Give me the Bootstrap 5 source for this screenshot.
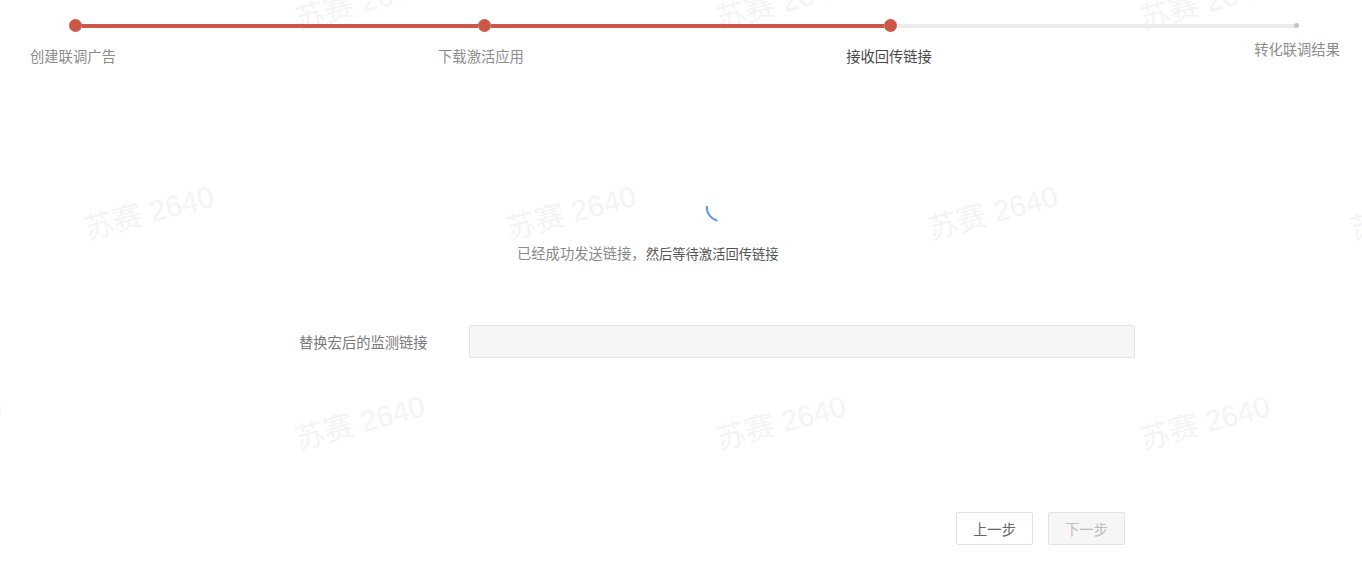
<!DOCTYPE html>
<html lang="zh-CN">
<head>
<meta charset="utf-8">
<title>接收回传链接</title>
<link href="https://cdn.jsdelivr.net/npm/bootstrap@5.3.0/dist/css/bootstrap.min.css" rel="stylesheet">
<style>
html,body{height:586px;overflow:hidden;background:#fff}
body{font-family:"Noto Sans CJK SC","Liberation Sans",sans-serif;font-size:14.3px;color:#666}
.page-wrap{position:relative;height:586px;overflow:hidden}
.wm-layer{position:absolute;inset:0;pointer-events:none}
.wm{position:absolute;font-size:29.5px;line-height:40px;color:#f4f4f4;white-space:nowrap;transform:rotate(-15deg);transform-origin:left center;font-family:"Liberation Sans","Noto Sans CJK SC",sans-serif}
.rail{height:51px;padding-left:69px;padding-top:19px}
.dot-big{width:13px;height:13px;border-radius:50%;background:#cb5748;flex:none}
.dot-small{width:5px;height:5px;border-radius:50%;background:#c4c4c4;flex:none}
.seg{height:4px;flex:none}
.seg-a{width:396px;background:#cb5748}
.seg-b{width:393px;background:#cb5748}
.seg-c{width:397px;background:#ececec}
.step-labels{padding:0 22px 0 30px;line-height:20px}
.step-text{color:#8c8c8c;white-space:nowrap;margin-top:-5px}
.step-now{color:#4a4a4a}
.step-last{margin-top:-12px}
.spin-zone{height:157px}
.spin-svg{display:block;margin-left:705px}
.msg{margin:19px 0 0 517px;line-height:22px;color:#8a8a8a;white-space:nowrap}
.msg-dark{color:#555;font-size:13.3px}
.field-row{margin-top:60px;height:33px}
.field-label{width:469px;padding-left:299px;color:#7a7a7a;white-space:nowrap}
.field-box{width:666px;height:33px;background:#f6f6f6;border:1px solid #e3e3e3;border-radius:2px;padding:0 8px}
.field-box:disabled{background:#f6f6f6;opacity:1}
.btn-row{margin-top:154px;padding-left:956px;gap:15px}
.step-btn{width:77px;height:33px;padding:0;font-size:14.3px;border-radius:2px;border:1px solid #e2e2e2;background:#fff;color:#666}
.step-btn:disabled{background:#f6f6f6;color:#bdbdbd;border-color:#e2e2e2;opacity:1}
.front{position:relative}
</style>
</head>
<body>
<div class="page-wrap">
  <div class="wm-layer" aria-hidden="true">
    <span class="wm" style="left:296px;top:0">苏赛 2640</span>
    <span class="wm" style="left:717px;top:0">苏赛 2640</span>
    <span class="wm" style="left:1141px;top:0">苏赛 2640</span>
    <span class="wm" style="left:85px;top:210px">苏赛 2640</span>
    <span class="wm" style="left:507px;top:210px">苏赛 2640</span>
    <span class="wm" style="left:929px;top:210px">苏赛 2640</span>
    <span class="wm" style="left:1351px;top:210px">苏赛 2640</span>
    <span class="wm" style="left:-127px;top:420px">苏赛 2640</span>
    <span class="wm" style="left:296px;top:420px">苏赛 2640</span>
    <span class="wm" style="left:717px;top:420px">苏赛 2640</span>
    <span class="wm" style="left:1141px;top:420px">苏赛 2640</span>
  </div>
  <div class="front">
    <div class="rail d-flex align-items-start">
      <div class="d-flex align-items-center">
        <span class="dot-big"></span><span class="seg seg-a"></span>
        <span class="dot-big"></span><span class="seg seg-b"></span>
        <span class="dot-big"></span><span class="seg seg-c"></span>
        <span class="dot-small"></span>
      </div>
    </div>
    <div class="step-labels d-flex justify-content-between align-items-start">
      <span class="step-text">创建联调广告</span>
      <span class="step-text">下载激活应用</span>
      <span class="step-text step-now">接收回传链接</span>
      <span class="step-text step-last">转化联调结果</span>
    </div>
    <div class="spin-zone d-flex flex-column justify-content-end">
      <svg class="spin-svg" width="16" height="18" viewBox="705 204 16 18" aria-hidden="true"><path d="M706.8 205 A14 14 0 0 0 717.5 219.6" fill="none" stroke="#5c9ce2" stroke-width="2"/></svg>
    </div>
    <p class="msg">已经成功发送链接，<span class="msg-dark">然后等待激活回传链接</span></p>
    <div class="field-row d-flex align-items-center">
      <label class="field-label" for="macro-url">替换宏后的监测链接</label>
      <input id="macro-url" class="field-box form-control-plaintext" type="text" disabled>
    </div>
    <div class="btn-row d-flex">
      <button type="button" class="btn step-btn">上一步</button>
      <button type="button" class="btn step-btn" disabled>下一步</button>
    </div>
  </div>
</div>
<script src="https://cdn.jsdelivr.net/npm/bootstrap@5.3.0/dist/js/bootstrap.bundle.min.js"></script>
</body>
</html>
